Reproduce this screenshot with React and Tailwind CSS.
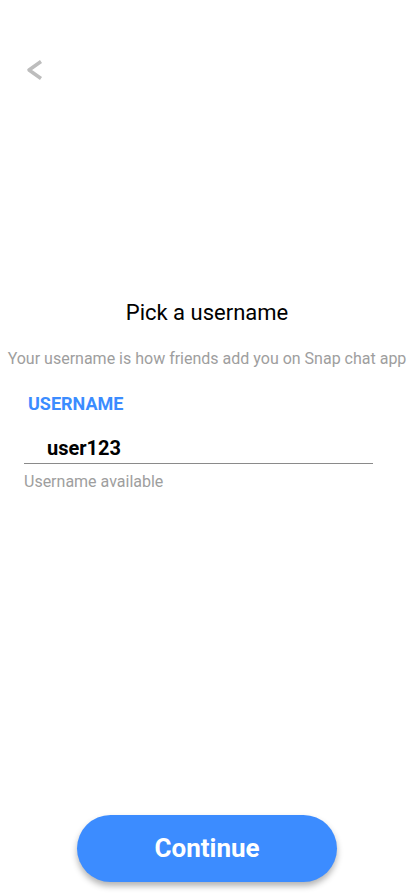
export default function App() {
  return (
    <div className="flex h-[896px] w-[414px] flex-col bg-white font-['Roboto',sans-serif]">
      <div className="pl-[26px] pt-[59px]">
        <svg width="18" height="22" viewBox="0 0 18 22" fill="none">
          <path d="M15 2.5 L3 11 L15 19.5" stroke="#bdbdbd" strokeWidth="3.5" strokeLinecap="butt" strokeLinejoin="round" />
        </svg>
      </div>

      <div className="mt-[218px] flex flex-col items-center">
        <h1 className="text-[22px] leading-[28px] text-black">Pick a username</h1>
        <p className="mt-[21px] whitespace-nowrap text-[16px] leading-[22px] text-[#9e9e9e]">
          Your username is how friends add you on Snap chat app
        </p>
      </div>

      <div className="mt-[22px] pl-[24px]">
        <p className="pl-[4px] text-[18px] font-bold leading-[24px] text-[#3b8cff]">USERNAME</p>
        <div className="mt-[19px] w-[349px] border-b border-[#8a8a8a] pb-[1px] pl-[23px]">
          <span className="text-[20px] font-bold leading-[26px] text-black">user123</span>
        </div>
        <p className="mt-[8px] text-[16px] leading-[20px] text-[#9e9e9e]">Username available</p>
      </div>

      <div className="mt-auto flex justify-center pb-[14px]">
        <button
          type="button"
          className="h-[67px] w-[260px] rounded-full bg-[#3c8cff] text-[26px] font-bold text-white shadow-[0_4px_6px_rgba(0,0,0,0.3)]"
        >
          Continue
        </button>
      </div>
    </div>
  )
}
